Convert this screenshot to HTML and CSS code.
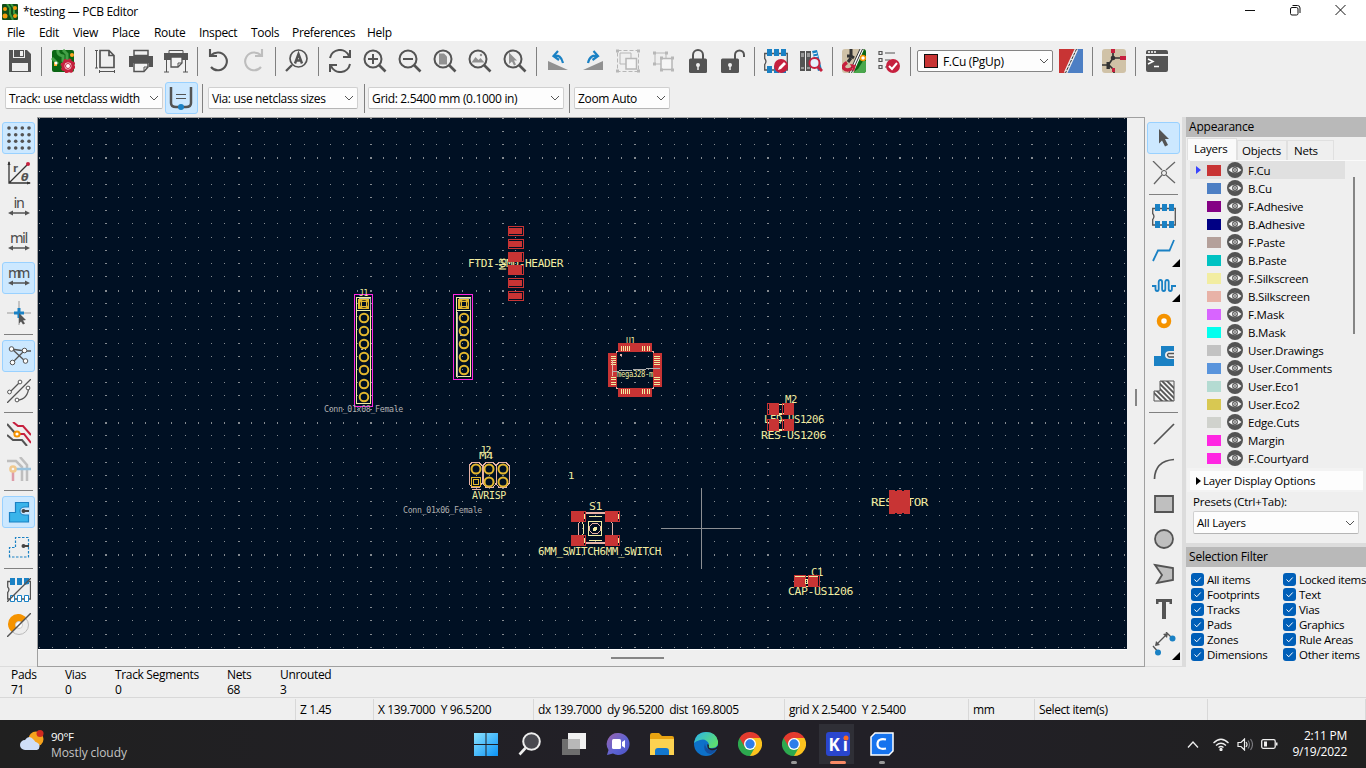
FILE: index.html
```html
<!DOCTYPE html>
<html lang="en">
<head>
<meta charset="utf-8">
<title>*testing — PCB Editor</title>
<link rel="stylesheet" href="styles.css">
</head>
<body>
<svg class="defs" width="0" height="0">
  <symbol id="eye" viewBox="0 0 16 16"><circle cx="8" cy="8" r="8" fill="#545454"/><path d="M1.500 8Q8 1.500 14.500 8Q8 14.500 1.500 8z" fill="#f5f5f5"/><circle cx="8" cy="8" r="2.900" fill="#545454"/><circle cx="8" cy="8" r="1.800" fill="#eee"/><circle cx="8" cy="8" r="1" fill="#777"/></symbol>
  <symbol id="lens" viewBox="0 0 24 24"><circle cx="10" cy="10" r="8.500" fill="none" stroke="#545454" stroke-width="2"/><path d="M16 16l6.500 6.500" stroke="#545454" stroke-width="2.600"/></symbol>
  <symbol id="chrome" viewBox="0 0 24 24"><path d="M12 12L1.600 6A12 12 0 0 1 22.400 6z" fill="#e33b2e"/><path d="M12 12L22.400 6A12 12 0 0 1 12 24z" fill="#fcc31e"/><path d="M12 12L12 24A12 12 0 0 1 1.600 6z" fill="#2da94f"/><path d="M12 6H22.400L17.200 15z" fill="#fcc31e"/><path d="M6.800 15L1.600 6L12 6z" fill="#e33b2e"/><path d="M17.200 15L12 24L6.800 15z" fill="#2da94f"/><circle cx="12" cy="12" r="6" fill="#fff"/><circle cx="12" cy="12" r="4.700" fill="#2d7de9"/></symbol>
  <symbol id="footprint" viewBox="0 0 24 24"><path d="M.7 4.500H23.300V21H.7V15.500q2.500-3 0-6z" fill="none" stroke="#545454" stroke-width="1.300"/><path d="M3 0h5v7h-5zM10 0h5v7h-5zM17 0h5v7h-5zM3 17h5v7h-5zM10 17h5v7h-5zM17 17h5v7h-5z" fill="#1a81c4"/></symbol>
  <symbol id="chev" viewBox="0 0 10 6"><path d="M1 1l4 4 4-4" fill="none" stroke="#555" stroke-width="1"/></symbol>
</svg>

<header class="titlebar">
  <svg width="16" height="16" viewBox="0 0 16 16"><rect width="16" height="16" rx="1" fill="#124d18"/><path d="M5 0L8 4V10L11 16M9 0L12 4V9L16 12" stroke="#3b9b42" stroke-width="2" fill="none"/><circle cx="3" cy="5" r="2" fill="#f39a0d"/><circle cx="3" cy="12" r="2.500" fill="#f39a0d"/><circle cx="13" cy="4" r="2" fill="#f39a0d"/><circle cx="13" cy="12" r="2" fill="#f39a0d"/></svg>
  <span class="caption">*testing — PCB Editor</span>
  <svg class="winctl" width="104" height="12" viewBox="0 0 104 12"><path d="M0 6.500h10" stroke="#111"/><rect x="45.500" y="3.500" width="7.500" height="7.500" rx="1.500" fill="none" stroke="#111"/><path d="M47.500 1.500h5q2.500 0 2.500 2.500v5" fill="none" stroke="#111"/><path d="M90.500 1l10 10m0-10l-10 10" stroke="#111"/></svg>
</header>
<nav class="menubar"><span>File</span><span>Edit</span><span>View</span><span>Place</span><span>Route</span><span>Inspect</span><span>Tools</span><span>Preferences</span><span>Help</span></nav>

<div class="toolbar">
  <b><svg viewBox="0 0 24 24"><path d="M1 1H19l4 4V23H1z" fill="#545454"/><path d="M5 1h12v8H5z" fill="#efefef"/><path d="M6 1h10v7H6z" fill="#545454"/><path d="M12 2h3v5h-3zM4 14h16v8H4z" fill="#efefef"/></svg></b><i></i>
  <b><svg viewBox="0 0 24 24"><rect x="1" y="1" width="22" height="22" rx="2" fill="#0b6614"/><path d="M7 1q-1 5 5 6v5l5 5M12 1l4 4v6l7 6M1 9l6 6" fill="none" stroke="#43a047" stroke-width="3"/><path d="M3 15h3" stroke="#ffa726" stroke-width="4"/><circle cx="21" cy="6" r="2" fill="#ffa726"/><circle cx="5" cy="14" r="1.500" fill="#fff"/><circle cx="17" cy="17" r="5" fill="#fff" stroke="#c6203e" stroke-width="3.200"/><circle cx="17" cy="17" r="6.500" fill="none" stroke="#c6203e" stroke-width="2" stroke-dasharray="2.500 2.600"/><circle cx="17" cy="17" r="2.500" fill="#fff" stroke="#c6203e"/></svg></b><i></i>
  <b><svg viewBox="0 0 24 24" fill="none" stroke="#545454"><path d="M6 1.500h9l5 5V18.500H6zM15 1.500v5h5" stroke-width="1.700"/><path d="M2.500 1v18M1 1.500h3M1 19h3M5 22.500h16M5.500 21v3M20.500 21v3"/></svg></b>
  <b><svg viewBox="0 0 24 24"><path d="M5 1.500h14v5H5z" fill="none" stroke="#545454" stroke-width="1.500"/><path d="M0 7h24v11h-4v-4H4v4H0z" fill="#545454"/><path d="M5 14h14v4l-4 4.500H5z" fill="#f4f4f4" stroke="#545454" stroke-width="1.500"/><path d="M15 22v-4h4" fill="none" stroke="#545454"/></svg></b>
  <b><svg viewBox="0 0 24 24"><path d="M5 1.500h14v3H5z" fill="none" stroke="#545454"/><path d="M0 4h24v7H0z" fill="#545454"/><path d="M2.500 11v12M21.500 11v12M0 23h5M19 23h5" stroke="#545454"/><path d="M7 8h11v6l-4 4H7z" fill="#f4f4f4" stroke="#545454" stroke-width="1.300"/><path d="M14 18v-4h4" fill="none" stroke="#545454"/></svg></b><i></i>
  <b><svg viewBox="0 0 24 24" fill="none" stroke="#545454" stroke-width="2.100"><path d="M3 0v7h7M3.500 6.500Q7 3.500 11 3.500A8.900 8.900 0 1 1 4 18"/></svg></b>
  <b><svg viewBox="0 0 24 24" fill="none" stroke="#bdbdbd" stroke-width="2.100"><path d="M20 0v7h-7M19.500 6.500Q16 3.500 12 3.500A8.900 8.900 0 1 0 19 18"/></svg></b><i></i>
  <b><svg viewBox="0 0 24 24"><circle cx="13.500" cy="9.500" r="8.500" fill="none" stroke="#545454" stroke-width="1.700"/><path d="M7 16L1 22" stroke="#545454" stroke-width="2.300"/><path d="M10 14.500L13.500 5 17 14.500M11 11.500h5" stroke="#545454" stroke-width="2.400" fill="none"/></svg></b><i></i>
  <b><svg viewBox="0 0 24 24" fill="none" stroke="#545454" stroke-width="2"><path d="M22 1v7h-7M21 7A10 10 0 0 0 2 9M2 23v-7h7M3 17A10 10 0 0 0 22 15"/></svg></b>
  <b><svg viewBox="0 0 24 24"><use href="#lens"/><path d="M5 10h10M10 5v10" stroke="#545454" stroke-width="2"/></svg></b>
  <b><svg viewBox="0 0 24 24"><use href="#lens"/><path d="M5 10h10" stroke="#545454" stroke-width="2"/></svg></b>
  <b><svg viewBox="0 0 24 24"><use href="#lens"/><path d="M6 4.500h5l3 3v8H6z" fill="#919191"/></svg></b>
  <b><svg viewBox="0 0 24 24"><use href="#lens"/><path d="M3.500 13.500L7.500 8l3 3 2-2 4 4.500z" fill="#919191"/><circle cx="13" cy="6" r="1.200" fill="#919191"/></svg></b>
  <b><svg viewBox="0 0 24 24"><use href="#lens"/><path d="M6 3.500l8 8h-3l2 4-2 1-2-4-3 2.500z" fill="#919191"/></svg></b><i></i>
  <b><svg viewBox="0 0 24 24"><path d="M2 12V21H22z" fill="#919191"/><path d="M7.500 7Q15 5 17 14M12 2L7.500 7l5.500 4" fill="none" stroke="#1a81c4" stroke-width="2.200"/></svg></b>
  <b><svg viewBox="0 0 24 24"><path d="M22 12V21H2z" fill="#919191"/><path d="M17 7Q9 5 7 14M12.500 2L17 7l-5.500 4" fill="none" stroke="#1a81c4" stroke-width="2.200"/></svg></b>
  <b><svg viewBox="0 0 24 24" fill="none" stroke="#b7b7b7"><path d="M1.500 1.500h21v21h-21z" stroke-dasharray="4 2"/><path d="M4 4h11v11H4z"/><path d="M10 9.500h10.500v10.500H10z" fill="#f5f5f5" stroke-width="1.500"/><path d="M0 2h3M21 2h3M0 22h3M21 22h3" stroke-width="3"/></svg></b>
  <b><svg viewBox="0 0 24 24" fill="none" stroke="#b7b7b7"><path d="M4 4h11v11H4z"/><path d="M10 9.500h11v11H10z" fill="#f5f5f5" stroke-width="1.500"/><path d="M2 4h3M14 4h3M2 15h3M9 9h3M20 9h3M9 21h3M20 21h3" stroke-width="3"/></svg></b>
  <b><svg viewBox="0 0 24 24"><path d="M7 11V6a5 5 0 0 1 10 0v5" fill="none" stroke="#545454" stroke-width="2"/><rect x="3" y="9.500" width="18" height="14.500" rx="1.500" fill="#545454"/><circle cx="12" cy="16" r="2" fill="#eee"/><path d="M12 16v5" stroke="#eee" stroke-width="1.500"/></svg></b>
  <b><svg viewBox="0 0 24 24"><path d="M14 11V6a4.500 4.500 0 0 1 9 0v2" fill="none" stroke="#545454" stroke-width="2"/><rect x="0" y="9.500" width="18" height="14.500" rx="1.500" fill="#545454"/><circle cx="9" cy="16" r="2" fill="#eee"/><path d="M9 16v5" stroke="#eee" stroke-width="1.500"/></svg></b><i></i>
  <b><svg viewBox="0 0 24 24"><use href="#footprint"/><circle cx="17" cy="17" r="7" fill="#c6203e"/><path d="M14 21l1-3 5-5 2 2-5 5z" fill="#fff"/></svg></b>
  <b><svg viewBox="0 0 24 24"><path d="M1 2h5v20H1zM7 2h5v20H7z" fill="#545454"/><path d="M2 5h3M2 7h3M8 5h3M8 7h3M2 19h3M8 19h3" stroke="#ddd"/><path d="M13 2l5-1 5 20-4 1z" fill="#1a81c4"/><path d="M14 5l4-1M15 8l4-1" stroke="#fff"/><circle cx="15.500" cy="14" r="5" fill="#e5f1fa" stroke="#c6203e" stroke-width="2"/><path d="M19 18l4 4" stroke="#c6203e" stroke-width="3"/></svg></b><i></i>
  <b><svg viewBox="0 0 24 24"><rect width="24" height="24" rx="3" fill="#d0c2a7"/><path d="M20 0h1q3 0 3 3v18q0 3-3 3H9z" fill="#0b6614"/><path d="M21 12h3v9q0 3-3 3H10l6-4z" fill="#4aa74d"/><path d="M9 0v7H5m4 0l3 2M6 13l3-4" stroke="#333" stroke-width="3" fill="none"/><path d="M20 0L9 24" stroke="#fff" stroke-width="4"/><path d="M20.500 0L9.500 24M18 0L7 24" stroke="#333" stroke-width="1"/><circle cx="21" cy="9" r="2.500" fill="#fff" stroke="#f59300" stroke-width="1.500"/><path d="M5 13.500q-5 3-3 6 3 3 8 0" stroke="#c6203e" stroke-width="3.500" fill="none"/><path d="M8 15l6 1-2 7z" fill="#c6203e"/></svg></b>
  <b><svg viewBox="0 0 24 24"><path d="M2 2.500h3v3H2zM2 9.500h3v3H2zM2 16.500h3v3H2zM8 4h10M8 11h5M8 18h3" stroke="#545454" stroke-width="1.200" fill="none"/><circle cx="16" cy="17" r="7" fill="#c6203e"/><path d="M12 17l3 3 5-6" stroke="#fff" stroke-width="2" fill="none"/></svg></b><i></i>
  <div class="combo layer"><span class="sw"></span><span>F.Cu (PgUp)</span><svg><use href="#chev"/></svg></div>
  <b><svg viewBox="0 0 24 24"><path d="M0 0h17L6 24H0z" fill="#c83434"/><path d="M18 0h6v24H7z" fill="#4d7fc4"/><path d="M17.500 0L6.500 24" stroke="#eee" stroke-width="3.500"/><path d="M17.500 0L6.500 24" stroke="#333" stroke-width="1" stroke-dasharray="3 1"/></svg></b><i></i>
  <b><svg viewBox="0 0 24 24"><rect width="24" height="24" rx="3" fill="#d0c2a7"/><path d="M11 0v9l-4 6v5M11 9h9M0 16h7l5 5v3" fill="none" stroke="#333" stroke-width="1.700"/><circle cx="11" cy="9" r="2.300" fill="#333"/><path d="M6 13v7" stroke="#333" stroke-width="3"/><path d="M9 0h4v4H9zM18 7h6v4h-6zM10 19h3v4h-3z" fill="#c6203e"/></svg></b><i></i>
  <b><svg viewBox="0 0 24 24"><path d="M3 1h18q2 0 2 2v2H1V3q0-2 2-2zM1 7h22v14q0 2-2 2H3q-2 0-2-2z" fill="#545454"/><path d="M3 3h2M6 3h2M9 3h2M9 17.500h5" stroke="#fff" stroke-width="1.300"/><path d="M3 10l5 2.500-5 2.500" fill="none" stroke="#fff" stroke-width="1.500"/></svg></b>
</div>
<div class="toolbar second">
  <div class="combo track"><span>Track: use netclass width</span><svg><use href="#chev"/></svg></div>
  <b class="on"><svg viewBox="0 0 24 24"><path d="M2 1V17q0 4 5 4H17q5 0 5-4V1" fill="none" stroke="#545454" stroke-width="2.500"/><path d="M7 8.500h10M7 12.500h10" stroke="#545454" stroke-width="1.200"/><circle cx="12" cy="21" r="3" fill="#1a81c4"/></svg></b><i></i>
  <div class="combo via"><span>Via: use netclass sizes</span><svg><use href="#chev"/></svg></div><i></i>
  <div class="combo grid"><span>Grid: 2.5400 mm (0.1000 in)</span><svg><use href="#chev"/></svg></div><i></i>
  <div class="combo zoom"><span>Zoom Auto</span><svg><use href="#chev"/></svg></div>
</div>

<main class="work">
  <aside class="side left">
    <b class="on"><svg id="gridicon" viewBox="0 0 24 24" fill="#545454"></svg></b>
    <b><svg viewBox="0 0 24 24"><path d="M2 1v21h21M2 22L20 4" fill="none" stroke="#333" stroke-width="1.300"/><path d="M.500 4L2 0l1.500 4zM20 20.500l4 1.500-4 1.500z" fill="#333"/><circle cx="21" cy="3" r="2" fill="#c6203e"/><text x="6" y="10.500" class="polar">r</text><text x="14" y="20" class="polar it">θ</text></svg></b>
    <b><svg viewBox="0 0 24 24"><text x="12" y="12" class="unit" textLength="11">in</text><path d="M3 17h18" stroke="#545454" stroke-width="1.500"/><path d="M1 17l5-2.500v5zM23 17l-5-2.500v5z" fill="#545454"/></svg></b>
    <b><svg viewBox="0 0 24 24"><text x="12" y="12" class="unit" textLength="18">mil</text><path d="M3 17h18" stroke="#545454" stroke-width="1.500"/><path d="M1 17l5-2.500v5zM23 17l-5-2.500v5z" fill="#545454"/></svg></b>
    <b class="on"><svg viewBox="0 0 24 24"><text x="12" y="12" class="unit" textLength="22">mm</text><path d="M3 17h18" stroke="#545454" stroke-width="1.500"/><path d="M1 17l5-2.500v5zM23 17l-5-2.500v5z" fill="#545454"/></svg></b>
    <b><svg viewBox="0 0 24 24"><path d="M0 12h24M12 0v24" stroke="#999"/><path d="M7 12h10M12 7v10" stroke="#1a81c4" stroke-width="3"/><path d="M12 12l7 7-3 .5 2 3-2 1-2-3-2 2z" fill="#545454"/></svg></b><i></i>
    <b class="on"><svg viewBox="0 0 24 24"><path d="M4 5l14 2h6M5 5l13 12M6 18L17 7" stroke="#545454" stroke-width="1.300" fill="none"/><g fill="#fff" stroke="#545454"><circle cx="4.500" cy="5" r="2.300"/><circle cx="17.500" cy="6.500" r="2.300"/><circle cx="5.500" cy="18.500" r="2.300"/><circle cx="18.500" cy="17" r="2.300"/></g></svg></b>
    <b><svg viewBox="0 0 24 24"><path d="M2 14L13 3M0 24L24 0M10 21q11 0 12-14" stroke="#545454" stroke-width="1.300" fill="none"/><g fill="#fff" stroke="#545454"><circle cx="2.500" cy="13" r="1.900"/><circle cx="13" cy="3" r="1.900"/><circle cx="10" cy="21" r="1.900"/><circle cx="21" cy="9" r="1.900"/></g></svg></b><i></i>
    <b><svg viewBox="0 0 24 24" fill="none" stroke-width="2"><path d="M0 2l8 9M0 13l6 5h9l5 6" stroke="#545454"/><path d="M6 0l5 4h5l8 9M11 12h6l7 9" stroke="#c6203e"/><circle cx="10" cy="12" r="2.600" fill="#fff" stroke="#f59300"/></svg></b>
    <b><svg class="faint" viewBox="0 0 24 24" fill="none" stroke-width="2.500"><path d="M0 4h9l6 6v14M13 0l7 8v16" stroke="#777"/><path d="M9 12h15" stroke="#1a81c4"/><path d="M6 15v9" stroke="#c6203e"/><circle cx="6" cy="12" r="2.600" fill="#fff" stroke="#f59300"/></svg></b><i></i>
    <b class="on"><svg viewBox="0 0 24 24"><path d="M2.500 22V12.500H8.500V2.500H21.500V22z" fill="#39b4ea" stroke="#1a81c4" stroke-width="1.200"/><path d="M22 7h-4q-5 0-5 4t5 4h4" fill="#cce8ff" stroke="#1a81c4"/><circle cx="16.500" cy="11" r="2" fill="#444"/><path d="M17 11h5" stroke="#444" stroke-width="2"/></svg></b>
    <b><svg viewBox="0 0 24 24"><path d="M2.500 22V12.500H8.500V2.500H21.500V22z" fill="none" stroke="#1a81c4" stroke-width="1.200" stroke-dasharray="2.500 1.500"/><circle cx="16.500" cy="11" r="2" fill="#444"/><path d="M17 11h5" stroke="#444" stroke-width="2"/></svg></b><i></i>
    <b><svg viewBox="0 0 24 24"><path d="M3 3.500H.700V9q2.500 2.500 0 5.500V21H23.500V3.500H17" fill="none" stroke="#545454" stroke-width="1.300"/><path d="M3 0h5v7h-5zM10 0h5v7h-5zM17 0h5v6l-5 1z" fill="#1a81c4"/><path d="M3.500 17.500h4v6h-4zM10.500 17.500h4v6h-4zM17.500 17.500h4v6h-4z" fill="#fff" stroke="#1a81c4"/><path d="M0 24L24 0" stroke="#545454" stroke-width="1.300"/></svg></b>
    <b><svg viewBox="0 0 24 24"><circle cx="12" cy="12" r="9.500" fill="#ededed" stroke="#bbb"/><path d="M5 19A10 10 0 1 1 19 5z" fill="#f59300"/><circle cx="12" cy="12" r="3.500" fill="#fff" stroke="#ccc"/><path d="M0 24L24 0" stroke="#545454" stroke-width="1.400"/></svg></b>
  </aside>

  <section class="viewport">
    <svg class="pcb" width="1089" height="531" viewBox="38 118 1089 531" shape-rendering="crispEdges">
      <path id="dots" fill="#858b91"/>
      <path d="M661 528.500h80M701.500 488v81" stroke="#8c8f93"/>
      <g id="board"></g>
    </svg>
    <div class="vbar"><span></span></div>
    <div class="hbar"><span></span></div>
  </section>

  <aside class="side right">
    <b class="on"><svg viewBox="0 0 24 24"><path d="M7 3l10 10h-4l3 6-3 1.500-3-6-3 3z" fill="#545454"/></svg></b>
    <b><svg viewBox="0 0 24 24"><path d="M1 0l9 9M23 1l-9 8M10 14L2 23M14 14l9 8" stroke="#666" stroke-width="1.300"/><circle cx="12" cy="12" r="2.500" fill="none" stroke="#545454"/></svg></b><i></i>
    <b><svg viewBox="0 0 24 24"><use href="#footprint"/></svg></b>
    <b class="more"><svg viewBox="0 0 24 24"><path d="M1 22l5-10.500h11.500L22 1" fill="none" stroke="#1a81c4" stroke-width="1.800"/></svg></b>
    <b class="more"><svg viewBox="0 0 24 24"><path d="M0 12h3.500v3q0 2 1.600 2t1.600-2V8q0-2 1.700-2t1.700 2v7q0 2 1.600 2t1.600-2V8q0-2 1.700-2t1.700 2v7q0 2 1.600 2t1.600-2v-3H24" fill="none" stroke="#1a81c4" stroke-width="1.800"/></svg></b>
    <b><svg viewBox="0 0 24 24"><circle cx="12" cy="12" r="5" fill="#fff" stroke="#f59300" stroke-width="4.500"/></svg></b>
    <b><svg viewBox="0 0 24 24"><path d="M2 22V12h7V2h13v20z" fill="#1a81c4"/><path d="M22 7h-4q-5 0-5 4t5 4h4z" fill="#efefef"/><path d="M22 9.500h-5M22 13h-5q-3-2 0-4" stroke="#545454" stroke-width="1.500" fill="none"/></svg></b>
    <b><svg viewBox="0 0 24 24"><defs><clipPath id="zone"><path d="M2 22V12h6V2h14v20z"/></clipPath></defs><path clip-path="url(#zone)" d="M-12 0l24 24M-7 0l24 24M-2 0l24 24M3 0l24 24M8 0l24 24M13 0l24 24" stroke="#545454" stroke-width="1.800"/><path d="M2 22V12h6V2h14v20z" fill="none" stroke="#545454"/></svg></b><i></i>
    <b><svg viewBox="0 0 24 24"><path d="M2 22L22 2" stroke="#545454" stroke-width="1.700"/></svg></b>
    <b><svg viewBox="0 0 24 24"><path d="M2.500 22Q3 4 22 2.500" fill="none" stroke="#545454" stroke-width="1.700"/></svg></b>
    <b><svg viewBox="0 0 24 24"><path d="M3 4h18v16H3z" fill="#bfbfbf" stroke="#545454" stroke-width="1.800"/></svg></b>
    <b><svg viewBox="0 0 24 24"><circle cx="12" cy="12" r="9" fill="#bfbfbf" stroke="#545454" stroke-width="1.800"/></svg></b>
    <b><svg viewBox="0 0 24 24"><path d="M3 3l18 3v12L5 21l5-8z" fill="#bfbfbf" stroke="#545454" stroke-width="1.800"/></svg></b>
    <b><svg viewBox="0 0 24 24"><path d="M4 2h16v5h-2.500V5H14v17h-4V5H6.500v2H4z" fill="#545454"/></svg></b>
    <b class="more"><svg viewBox="0 0 24 24"><path d="M4 13L15 2M1 14l6 7M14 0l7 7" stroke="#545454" stroke-width="1.300"/><path d="M3 14l1-5 4 4zM16 1l-1 5-4-4z" fill="#545454"/><circle cx="6" cy="20.500" r="3" fill="#1a81c4"/><circle cx="20.500" cy="6.500" r="3" fill="#1a81c4"/></svg></b>
  </aside>

  <aside class="panel">
    <h2>Appearance</h2>
    <div class="tabs"><span class="cur">Layers</span><span>Objects</span><span>Nets</span></div>
    <div class="layers"><ul id="layers"></ul><em></em></div>
    <div class="opts"><svg width="5" height="8"><path d="M0 0l5 4-5 4z"/></svg>Layer Display Options</div>
    <div class="presets"><label>Presets (Ctrl+Tab):</label><div class="combo preset"><span>All Layers</span><svg><use href="#chev"/></svg></div></div>
    <h2 class="sel">Selection Filter</h2>
    <div class="filter" id="filter"></div>
  </aside>
</main>

<div class="info"><span>Pads<br>71</span><span>Vias<br>0</span><span>Track Segments<br>0</span><span>Nets<br>68</span><span>Unrouted<br>3</span></div>
<div class="status"><span></span><span>Z 1.45</span><span>X 139.7000&nbsp; Y 96.5200</span><span>dx 139.7000&nbsp; dy 96.5200&nbsp; dist 169.8005</span><span>grid X 2.5400&nbsp; Y 2.5400</span><span>mm</span><span>Select item(s)</span><span></span></div>

<footer class="taskbar">
  <div class="weather">
    <svg width="25" height="24" viewBox="0 0 25 24"><circle cx="16" cy="9" r="7.500" fill="#f6a21c"/><circle cx="20" cy="3.500" r="3.500" fill="#d12b20"/><path d="M5 20a5 5 0 0 1 0-10q4-6 9 0q1 2 3 2.500a4 4 0 0 1 0 7.500z" fill="#cfdef7"/></svg>
    <p>90°F<small>Mostly cloudy</small></p>
  </div>
  <div class="apps">
    <a><svg viewBox="0 0 24 24"><defs><linearGradient id="win" x2="1" y2="1"><stop stop-color="#8be3ff"/><stop offset="1" stop-color="#0b93f5"/></linearGradient></defs><path d="M0 1h11.500v11H0zM12.500 1H24v11H12.500zM0 13h11.500v11H0zM12.500 13H24v11H12.500z" fill="url(#win)"/></svg></a>
    <a><svg viewBox="0 0 24 24"><circle cx="13.500" cy="9.500" r="8.300" fill="#494950" stroke="#eee" stroke-width="2"/><path d="M7.500 16L1.500 22.500" stroke="#eee" stroke-width="2.600"/></svg></a>
    <a><svg viewBox="0 0 24 24"><path d="M6 1h18v16H6z" fill="#f1f1f1"/><path d="M0 7h18v16H0z" fill="#777" opacity=".9"/><path d="M6 7h12v10H6z" fill="#b8b8b8"/></svg></a>
    <a><svg viewBox="0 0 24 24"><defs><linearGradient id="chat" x2="1" y2="1"><stop stop-color="#9a63ac"/><stop offset=".6" stop-color="#5b63d4"/><stop offset="1" stop-color="#4d50bf"/></linearGradient></defs><path d="M12 1a11 11 0 1 1-5 20.500L1 23l1.500-5A11 11 0 0 1 12 1z" fill="url(#chat)"/><rect x="6" y="7" width="9" height="10" rx="1.500" fill="#fff"/><path d="M16 10l3-2v8l-3-2z" fill="#fff"/></svg></a>
    <a><svg viewBox="0 0 24 24"><path d="M0 3q0-2 2-2h7l3 3h10q2 0 2 2v17H0z" fill="#e8a311"/><path d="M0 7h24v16H0z" fill="#fcd251"/><path d="M5 23v-4q0-3 3-3h8q3 0 3 3v4z" fill="#1377ce"/></svg></a>
    <a><svg viewBox="0 0 24 24"><defs><linearGradient id="edge" y2=".6"><stop stop-color="#2ab2ec"/><stop offset="1" stop-color="#5ddf70"/></linearGradient></defs><circle cx="12" cy="12" r="12" fill="#0d71c9"/><path d="M0 11Q2 0 12 0q10 0 12 9q1 8-9 7q-2-1 0-4q-3-6-9-4-4 1-6 3z" fill="url(#edge)"/><path d="M11 11q-3 9 5 11 3 0 6-4l-6-.5q-5-1-5-6.500z" fill="#1450a0"/><path d="M13.500 12q-1 5 3 6t7-1.500l1 3V13q-3 5-9 3-1-1-.5-3z" fill="#222027"/></svg></a>
    <a><svg viewBox="0 0 24 24"><use href="#chrome"/></svg></a>
    <a class="run"><svg viewBox="0 0 24 24"><use href="#chrome"/></svg></a>
    <a class="run active"><svg viewBox="0 0 24 24"><rect width="24" height="24" rx="3" fill="#2a46ce"/><text x="2.500" y="19" class="ki" textLength="19">Ki</text><circle cx="20" cy="6" r="2.500" fill="#ff6a1d"/></svg></a>
    <a class="run"><svg viewBox="0 0 24 24"><path d="M5 1h18v18l-4 4H1V5z" fill="#1673ee" stroke="#fff" stroke-width="1.500"/><path d="M16 7.500Q7.500 6 7.500 12t8.500 4.500" fill="none" stroke="#fff" stroke-width="2.200"/></svg></a>
  </div>
  <div class="tray">
    <svg class="up" width="12" height="7" viewBox="0 0 12 7"><path d="M1 6.500l5-5.500 5 5.500" fill="none" stroke="#eee" stroke-width="1.300"/></svg>
    <svg width="16" height="13" viewBox="0 0 16 13" fill="none" stroke="#eee" stroke-width="1.300"><path d="M.500 5Q8-2.500 15.500 5M3 7.500q5-4.500 10 0M5.500 9.500q2.500-2 5 0"/><circle cx="8" cy="11.500" r="1" fill="#eee"/></svg>
    <svg width="16" height="13" viewBox="0 0 16 13" fill="none" stroke="#eee" stroke-width="1.200"><path d="M1 4.500h3L7.500 1v11L4 8.500H1zM9 4q2 2.500 0 5"/><path d="M11 2.500q3 4 0 8M13.500 1q4 5.500 0 11" stroke="#77777c"/></svg>
    <svg width="17" height="10" viewBox="0 0 17 10"><rect x=".7" y=".7" width="13.500" height="8.600" rx="1.500" fill="none" stroke="#eee" stroke-width="1.300"/><path d="M3 2.500h3v5H3zM15 3.500h1.500v3H15z" fill="#eee"/></svg>
    <p>2:11 PM<br>9/19/2022</p>
  </div>
</footer>
<script src="app.js"></script>
</body>
</html>
```

FILE: styles.css
```css
* { box-sizing: border-box; }
body { margin: 0; width: 1366px; height: 768px; overflow: hidden; display: flex; flex-direction: column; background: #efefef; color: #000; font: 12px/15px "Open Sans", "Noto Sans", sans-serif; letter-spacing: -.33px; }
.defs { position: absolute; }
svg { flex: none; }

.titlebar { height: 23px; background: #fff; display: flex; align-items: center; padding: 0 17px 0 2px; gap: 5px; }
.titlebar .winctl { margin-left: auto; margin-top: -3px; }
.menubar { height: 18px; background: #fff; display: grid; grid-template-columns: 32px 34px 39px 42px 45px 52px 41px 75px 60px; padding: 2px 0 0 7px; }

.toolbar { height: 40px; display: flex; align-items: center; padding-left: 2px; flex: none; }
.toolbar b { width: 35px; height: 32px; display: grid; place-items: center; flex: none; }
.toolbar b svg, .side b svg { width: 24px; height: 24px; display: block; }
.toolbar i { width: 8px; display: flex; justify-content: center; flex: none; }
.toolbar i::before { content: ""; width: 1px; height: 29px; background: #808080; }
.toolbar.second { height: 36px; padding: 0 0 2px 5px; }
.toolbar.second b { width: 33px; margin-left: 2px; }
.toolbar.second b svg { margin-right: 2px; }
.combo { height: 22px; background: #fdfdfd; border: 1px solid #d0d0d0; border-bottom-color: #b5b5b5; border-radius: 2px; display: flex; align-items: center; justify-content: space-between; padding: 0 3px 0 3px; white-space: nowrap; flex: none; }
.combo svg { width: 10px; height: 6px; }
.combo.layer { width: 136px; margin: 0 0 0 3px; border-color: #858585; gap: 5px; padding-left: 6px; }
.combo.layer span:nth-child(2) { flex: 1; }
.combo .sw { width: 14px; height: 14px; background: #c83434; border: 1px solid #111; }
.combo.track { width: 158px; }
.combo.via { width: 150px; margin: 0 2px 0 2px; }
.combo.grid { width: 196px; margin: 0 1px 0 0; }
.combo.zoom { width: 96px; margin-left: 1px; }
.on { background: #cce8ff; border: 1px solid #99d1ff; border-radius: 3px; }

.work { height: 550px; display: flex; flex: none; }
.side { width: 37px; display: flex; flex-direction: column; align-items: center; padding-top: 5px; gap: 3px; border-bottom: 1px solid #dcdcdc; }
.side b { width: 33px; height: 32px; display: grid; place-items: center; flex: none; position: relative; }
.side i { height: 5px; padding-top: 2px; width: 29px; }
.side i::before { content: ""; display: block; height: 1px; background: #808080; }
.more::after { content: ""; position: absolute; right: 0; bottom: 0; border: 4px solid transparent; border-right-color: #000; border-bottom-color: #000; }
.faint { opacity: .4; }
.polar { font: bold 10px "DejaVu Sans"; fill: #545454; }
.it { font-style: italic; font-size: 11px; }
.unit { font: 14px "DejaVu Sans"; fill: #4b4b4b; text-anchor: middle; }

.viewport { width: 1108px; display: grid; grid-template: 531px 1fr / 1089px 1fr; border: 1px solid #a0a0a0; }
.pcb { background: #001023; display: block; }
.vbar { padding: 271px 0 0 8px; }
.vbar span { display: block; width: 2px; height: 17px; background: #858585; }
.hbar { padding: 7px 0 0 573px; border-top: 1px solid #fff; }
.hbar span { display: block; width: 53px; height: 2px; background: #858585; }
.silk { font-family: "DejaVu Sans Mono"; fill: #f2eda1; }
.fab { font-family: "DejaVu Sans Mono"; fill: #afafaf; }

.panel { flex: 1; border-left: 4px solid #dcdcdc; overflow: hidden; letter-spacing: -.2px; font-family: "Open Sans"; font-size: 11.5px; }
.panel h2 { margin: 0; height: 20px; background: #b9b9b9; font: 12px/20px "Open Sans"; padding-left: 3px; }
.tabs { display: flex; align-items: flex-end; height: 23px; padding-left: 1px; }
.tabs span { height: 20px; border: 1px solid #e0e0e0; border-bottom: 0; padding: 1px 0 0 4px; width: 50px; line-height: 17px; }
.tabs span:last-child { width: 47px; padding-left: 6px; }
.tabs .cur { height: 22px; background: #fafafa; width: 50px; padding: 1px 6px 0; }
.layers { height: 308px; display: flex; margin-left: 4px; border-top: 1px solid #fafafa; }
.layers ul { list-style: none; width: 155px; margin: 0; padding: 0; }
.layers li { height: 18px; display: flex; align-items: center; padding-left: 17px; }
.layers li:first-child { background: #e0e0e0; padding-left: 6px; }
.layers li:first-child::before { content: ""; border: solid transparent; border-width: 4px 0 4px 5px; border-left-color: #3844ff; margin-right: 6px; }
.layers li span { width: 14px; height: 11px; margin-right: 6px; }
.layers li svg { width: 16px; height: 16px; margin-right: 5px; }
.layers em { width: 2px; height: 157px; background: #858585; margin: 16px 0 0 8px; }
.opts { height: 24px; margin: 0 3px 0 1px; padding-left: 6px; background: #fdfdfd; border: solid #f3f3f3; border-width: 3px 0 2px 3px; display: flex; gap: 2px; align-items: center; line-height: 14px; }
.presets { height: 55px; padding: 2px 0 0 7px; border-bottom: 4px solid #dcdcdc; display: grid; align-content: start; gap: 2px; }
.presets .combo { width: 166px; height: 23px; }
.filter { display: grid; grid-template-columns: 92px 1fr; grid-auto-rows: 15px; padding: 5px 0 0 5px; letter-spacing: -.28px; }
.filter label { display: flex; align-items: center; gap: 3px; white-space: nowrap; }
.filter svg { width: 13px; height: 13px; }

.info { height: 31px; display: grid; grid-template-columns: 54px 50px 112px 53px 100px; padding: 0 0 0 11px; border-bottom: 1px solid #d8d8d8; flex: none; }
.status { height: 22px; display: grid; grid-template-columns: 296px 78px 160px 251px 184px 66px 173px 1fr; flex: none; line-height: 21px; padding-top: 1px; }
.status span { border-right: 1px solid #d8d8d8; padding-left: 4px; white-space: pre; height: 21px; letter-spacing: -.4px; }

.taskbar { height: 48px; background: linear-gradient(90deg, #202020, #222027 45%, #222027 65%, #202020); display: flex; position: relative; color: #fff; }
.weather { display: flex; width: 464px; padding: 10px 0 0 20px; gap: 6px; }
.weather p { margin: -1px 0 0; line-height: 16px; font-size: 11.5px; }
.weather small { display: block; color: #c4c4c4; font-size: 12px; letter-spacing: -.08px; }
.apps { display: flex; }
.apps a { width: 44px; height: 48px; display: grid; place-items: center; position: relative; }
.apps svg { width: 24px; height: 24px; }
.run::after { content: ""; position: absolute; left: 19px; bottom: 4px; width: 6px; height: 3px; border-radius: 2px; background: #999; }
.active { background: linear-gradient(#2f2f36, #2f2f36) 3px 4px / 35px 40px no-repeat; }
.active::after { left: 14px; width: 16px; background: #f98a66; }
.ki { font: bold 17px "Open Sans"; fill: #fff; }
.tray { margin-left: auto; padding-right: 19px; display: flex; align-items: center; gap: 8px; }
.tray .up { margin-right: 6px; }
.tray p { margin: 0 0 0 6px; text-align: right; line-height: 16px; font-size: 12px; letter-spacing: -.25px; }
```

FILE: app.js
```js
const $ = id => document.getElementById(id);

// Visible layers with their swatch colours
$('layers').innerHTML = [
  ['F.Cu', '#c83434'], ['B.Cu', '#4d7fc4'], ['F.Adhesive', '#840084'], ['B.Adhesive', '#000084'],
  ['F.Paste', '#b4a09a'], ['B.Paste', '#00c2c2'], ['F.Silkscreen', '#f2eda1'], ['B.Silkscreen', '#e8b2a7'],
  ['F.Mask', '#d864ff'], ['B.Mask', '#02ffee'], ['User.Drawings', '#c2c2c2'], ['User.Comments', '#5994dc'],
  ['User.Eco1', '#b4dbd2'], ['User.Eco2', '#d8c852'], ['Edge.Cuts', '#d0d2cd'], ['Margin', '#ff26e2'], ['F.Courtyard', '#ff26e2']
].map(([n, c]) => `<li><span style="background:${c}"></span><svg><use href="#eye"/></svg>${n}</li>`).join('');

$('filter').innerHTML = ['All items', 'Locked items', 'Footprints', 'Text', 'Tracks', 'Vias', 'Pads', 'Graphics',
  'Zones', 'Rule Areas', 'Dimensions', 'Other items'].map(t =>
  `<label><svg viewBox="0 0 13 13"><rect width="13" height="13" rx="3" fill="#005fb8"/><path d="M3.500 6.500l2.200 2.300 4-4.300" fill="none" stroke="#fff"/></svg>${t}</label>`).join('');

let g = '';
for (const y of [2, 8.700, 15.300, 22]) for (const x of [2, 8.700, 15.300, 22]) g += `<circle cx="${x}" cy="${y}" r="1.800"/>`;
$('gridicon').innerHTML = g;

// Grid dots, every tenth row and column drawn double
let d = '';
for (let i = -5; i < 78; i++) {
  const x = Math.floor(105.75 + 13.23 * i), w = i % 10 ? 1 : 2;
  for (let j = -3; j < 38; j++) {
    const y = Math.floor(157.8 + 13.23 * j), h = j % 10 ? 1 : 2;
    d += `M${x} ${y}h${w}v${h}h-${w}z`;
  }
}
$('dots').setAttribute('d', d);

const RED = '#c83434', SILK = '#f2eda1', BACK = '#e8b2a7', GOLD = '#e3b72e', MAG = '#ff26e2';
const box = (x, y, w, h, c, s = 1) => `<rect x="${x + .5}" y="${y + .5}" width="${w - 1}" height="${h - 1}" fill="none" stroke="${c}" stroke-width="${s}"/>`;
const fill = (x, y, w, h, c) => `<rect x="${x}" y="${y}" width="${w}" height="${h}" fill="${c}"/>`;
const line = (p, c, s = 1) => `<path d="${p}" fill="none" stroke="${c}" stroke-width="${s}"/>`;
const ring = (x, y, r = 4.300) => `<circle cx="${x}" cy="${y}" r="${r}" fill="none" stroke="${GOLD}" stroke-width="2" shape-rendering="auto"/>`;
const text = (s, x, y, w, size = 10, cls = 'silk', extra = '') => `<text x="${x}" y="${y}" class="${cls}" font-size="${size}" textLength="${w}" lengthAdjust="spacingAndGlyphs" ${extra}>${s}</text>`;
let b = '';

// Pin headers
for (const [x, w, bottom, ys] of [[354, 19, 406, [318, 331, 344, 357, 370, 384, 397]], [453, 20, 379, [318, 331, 344, 357, 370]]]) {
  const l = x + w - 17;
  b += box(x, 294, w, bottom - 293, MAG) + box(l, 297, 15, bottom - 299, SILK) + line(`M${l} 310.500h15`, SILK);
  b += line(`M${l + 3} 298.500h11v11`, '#afafaf') + fill(l + 2, 299, 11, 10, GOLD) + `<circle cx="${l + 8}" cy="304" r="3.800" fill="#001023" shape-rendering="auto"/>` + box(l + 5, 301, 6, 6, GOLD);
  for (const y of ys) b += ring(l + 8, y);
}
b += line('M457.500 312v66', '#afafaf') + text('J1', 359, 296, 9, 8);
b += line('M361 349.500h2m2 0h1M460 335.500h2m2 0h1', '#afafaf');
b += text('Conn_01x08_Female', 324, 412, 79, 8, 'fab') + text('Conn_01x06_Female', 403, 513, 79, 8.5, 'fab');

// Programming header
b += text('FTDI-SMD-HEADER', 468, 267, 95, 10) + text('M3', 0, 0, 12, 9.5, 'silk', 'transform="translate(506 270) rotate(-90)"');
for (const y of [226, 239, 252, 265, 278, 291]) b += box(508, y, 16, 10, RED) + fill(509, y + (y === 252 || y === 265 ? 1 : 2), 13, y === 252 || y === 265 ? 9 : 6, RED);

// AVRISP header
b += text('J2', 480, 453, 11, 9.5) + text('M4', 479, 459, 14, 9.5) + text('AVRISP', 472, 499, 34, 10.5);
for (const x of [469, 483, 496]) b += `<path d="M${x + 3} 462.500h7l3 3v18l-3 4h-7l-3-4v-18z" fill="none" stroke="${BACK}"/>`;
for (const x of [476, 489, 503]) b += ring(x, 469, 4.500) + (x > 476 ? ring(x, 482, 4.500) : box(471, 477, 10, 10, GOLD, 1.800));
b += box(473, 479, 6, 6, GOLD) + line('M472 489.500h9', BACK) + text('1', 568, 479, 6, 9.5);

// Tactile switch
b += line('M586 513h19M586 543h19', BACK, 2) + line('M589 516.500h13M589 540.500h13', SILK) + box(588, 521, 14, 15, SILK) +
  `<circle cx="595" cy="528.500" r="5.500" fill="none" stroke="${BACK}"/><circle cx="595" cy="529" r="2" fill="${SILK}"/>` +
  line('M579.500 521l-1 4v9l1 3M611.500 521l1 4v9l-1 3', BACK) + line('M582.500 522l1 4v6l-1 4', SILK);
for (const x of [571, 605]) for (const y of [511, 535]) b += box(x, y, 15, 11, RED) + fill(x + 1, y + 1, 12, 9, RED) + line(`M${x < 600 ? x + 13.5 : x + 13.5} ${y + 3}v5`, SILK);
b += text('S1', 589, 510, 13, 10) + text('6MM_SWITCH6MM_SWITCH', 538, 555, 123, 10);

// Microcontroller
b += text('U1', 626, 344, 9, 8) + box(616, 351, 38, 38, BACK);
b += fill(618, 343, 34, 9, RED) + fill(618, 388, 34, 9, RED) + fill(608, 353, 9, 34, RED) + fill(653, 353, 9, 34, RED);
for (const n of [3, 5, 7, 9, 11, 24, 26, 29, 31]) b += fill(618 + n, 346, 1, 5, SILK) + fill(618 + n, 389, 1, 5, SILK) + fill(611, 353 + n, 5, 1, SILK) + fill(654, 353 + n, 6, 1, SILK);
b += fill(620, 354, 2, 2, BACK) + line('M612 371.500L660 368', '#afafaf') + line('M612.500 360v16', BACK) + text('mega328-m', 617, 377, 36, 8);

// Two-pad parts
b += text('M2', 785, 403, 12, 10) + text('LED-US1206', 764, 423, 60, 10) + text('RES-US1206', 761, 439, 65, 10);
for (const y of [403, 419]) {
  b += line(`M769 ${y + 1.5}h23M769 ${y + 10.5}h23`, SILK);
  b += box(767, y, 12, 12, RED) + fill(769, y + 1, 9, 10, RED) + box(782, y, 12, 12, RED) + fill(784, y + 1, 9, 10, RED) + fill(779, y + 10, 3, 2, SILK);
}
b += text('RESISTOR', 871, 506, 57, 10) + fill(889, 491, 21, 22, RED) + line('M889 490.500h6m2 0h5m2 0h6M889 513.500h6m2 0h5m2 0h6', RED);
b += text('C1', 811, 576, 12, 10) + text('CAP-US1206', 788, 595, 65, 10);
b += line('M795 576.500h23M795 586.500h23', SILK) + box(794, 575, 12, 12, RED) + fill(795, 577, 10, 9, RED) + box(808, 575, 12, 12, RED) + fill(809, 577, 9, 9, RED) + box(805, 579, 3, 5, SILK);
$('board').innerHTML = b;
```
